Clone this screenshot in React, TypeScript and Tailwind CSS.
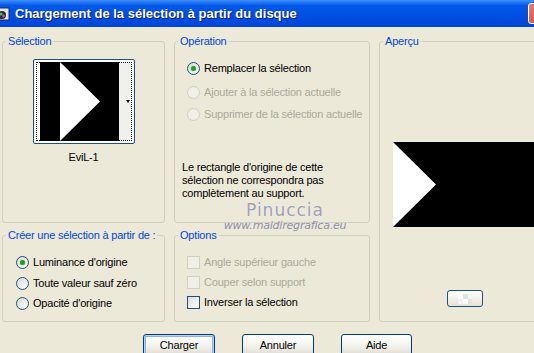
import React from "react";

type Opt = { label: string; checked?: boolean; disabled?: boolean; className?: string };

const Radio = ({ label, checked, disabled, className = "" }: Opt) => (
  <div className={`flex h-[13px] items-center gap-[4px] whitespace-nowrap ${className}`}>
    <span
      className={`flex h-[13px] w-[13px] shrink-0 items-center justify-center rounded-full border ${
        disabled
          ? "border-[#d3d0c2] bg-[#f1efe6]"
          : "border-[#1c5180] bg-linear-to-br from-[#d8d8d2] to-white"
      }`}
    >
      {checked && <span className="h-[5px] w-[5px] rounded-full bg-[#21a121] shadow-[0_0_1px_#62c462]" />}
    </span>
    <span className={disabled ? "text-[#aca899]" : "text-black"}>{label}</span>
  </div>
);

const Check = ({ label, disabled, className = "" }: Opt) => (
  <div className={`flex h-[13px] items-center gap-[4px] whitespace-nowrap ${className}`}>
    <span
      className={`h-[13px] w-[13px] shrink-0 border ${
        disabled
          ? "border-[#d3d0c2] bg-[#f1efe6]"
          : "border-[#1c5180] bg-linear-to-br from-[#dcdcd7] to-white"
      }`}
    />
    <span className={disabled ? "text-[#aca899]" : "text-black"}>{label}</span>
  </div>
);

const Group = ({
  title,
  className = "",
  children,
}: {
  title: string;
  className?: string;
  children?: React.ReactNode;
}) => (
  <fieldset className={`min-w-0 rounded-[3px] border border-[#d0d0bf] ${className}`}>
    <legend className="ml-[3px] whitespace-nowrap px-[2px] leading-[13px] text-[#0046d5]">{title}</legend>
    {children}
  </fieldset>
);

const Button = ({ label, main }: { label: string; main?: boolean }) => (
  <button
    className={`h-[23px] rounded-[3px] border border-[#003c74] bg-linear-to-b from-white via-[#f3f3ee] to-[#dcd8cc] text-black ${
      main ? "shadow-[inset_0_0_0_1px_#b9d3f7,inset_0_0_0_2px_#8bb1ec]" : ""
    }`}
  >
    {label}
  </button>
);

export default function App() {
  return (
    <div className="relative h-[353px] w-[534px] overflow-hidden bg-[#ece9d8] font-['Liberation_Sans',Tahoma,sans-serif] text-[11px] leading-[13px] tracking-[-0.2px]">
      {/* title bar */}
      <div className="flex h-[27px] items-center overflow-hidden bg-linear-to-b from-[#3d8ffa] from-0% via-[#0058e8] via-20% to-[#0046d8] to-100%">
        <svg width="13" height="14" viewBox="0 0 13 14" className="-ml-[3px] shrink-0">
          <rect x="1" y="1" width="11" height="12" fill="#e8e8f0" stroke="#1a2a6a" />
          <circle cx="5" cy="8" r="4" fill="#2a2a2a" />
          <circle cx="4" cy="7" r="1.6" fill="#39c94a" />
          <circle cx="6.5" cy="9" r="1.4" fill="#d23bd8" />
        </svg>
        <span className="ml-[5px] whitespace-nowrap text-[13px] font-bold tracking-[0px] text-white [text-shadow:1px_1px_#0a1a80]">
          Chargement de la sélection à partir du disque
        </span>
        <span className="ml-auto -mr-[15px] h-[21px] w-[21px] shrink-0 rounded-[3px] border border-white bg-linear-to-br from-[#e8826a] to-[#c73a1c]" />
      </div>

      {/* body */}
      <div className="grid grid-cols-[163px_196px_172px] grid-rows-[188px_93px] gap-x-[9px] gap-y-[6px] pl-[2px] pt-[8px]">
        <Group title="Sélection" className="flex flex-col items-center">
          <div className="mt-[11px] flex h-[85px] w-[102px] rounded-[2px] border border-[#1c5180] bg-white p-[2px]">
            <div className="flex flex-1 items-center border border-dotted border-black pl-[3px]">
              <svg width="79" height="79" viewBox="0 0 79 79" className="shrink-0">
                <rect width="79" height="79" fill="#000" />
                <polygon points="20,0 60,39.5 20,79" fill="#fff" />
              </svg>
              <div className="flex h-full flex-1 items-center justify-end bg-[#f0f0ec] pr-[1px]">
                <span className="h-0 w-0 border-x-[2.5px] border-t-[3px] border-x-transparent border-t-black" />
              </div>
            </div>
          </div>
          <div className="mt-[7px] text-black">EviL-1</div>
        </Group>

        <Group title="Opération" className="flex flex-col">
          <Radio label="Remplacer la sélection" checked className="ml-[12px] mt-[14px]" />
          <Radio label="Ajouter à la sélection actuelle" disabled className="ml-[12px] mt-[11px]" />
          <Radio label="Supprimer de la sélection actuelle" disabled className="ml-[12px] mt-[9px]" />
          <p className="ml-[7px] mt-[40px] text-black">
            Le rectangle d'origine de cette
            <br />
            sélection ne correspondra pas
            <br />
            complètement au support.
          </p>
        </Group>

        <Group title="Aperçu" className="row-span-2 flex flex-col">
          <svg width="144" height="85" viewBox="0 0 144 85" className="ml-[13px] mt-[94px] shrink-0">
            <rect width="144" height="85" fill="#000" />
            <polygon points="0,0 43,42.5 0,85" fill="#fff" />
          </svg>
          <div className="ml-[67px] mt-[63px] flex h-[17px] w-[36px] items-center justify-center rounded-[3px] border border-[#1c5180] bg-linear-to-b from-white to-[#e6e3d6]">
            <svg width="14" height="10" viewBox="0 0 14 10">
              <rect width="14" height="10" fill="#f4f4f0" />
              <rect x="0" y="0" width="5" height="5" fill="#fff" />
              <rect x="5" y="5" width="5" height="5" fill="#fff" />
              <rect x="5" y="0" width="5" height="5" fill="#e2e2de" />
              <rect x="10" y="5" width="4" height="5" fill="#e2e2de" />
            </svg>
          </div>
        </Group>

        <Group title="Créer une sélection à partir de :" className="flex flex-col">
          <Radio label="Luminance d'origine" checked className="ml-[13px] mt-[14px]" />
          <Radio label="Toute valeur sauf zéro" className="ml-[13px] mt-[8px]" />
          <Radio label="Opacité d'origine" className="ml-[13px] mt-[7px]" />
        </Group>

        <Group title="Options" className="flex flex-col">
          <Check label="Angle supérieur gauche" disabled className="ml-[12px] mt-[14px]" />
          <Check label="Couper selon support" disabled className="ml-[12px] mt-[7px]" />
          <Check label="Inverser la sélection" className="ml-[12px] mt-[7px]" />
        </Group>
      </div>

      {/* buttons */}
      <div className="mt-[12px] grid grid-cols-[72px_72px_71px] gap-x-[27px] pl-[143px]">
        <Button label="Charger" main />
        <Button label="Annuler" />
        <Button label="Aide" />
      </div>

      {/* watermark */}
      <div className="pointer-events-none absolute left-[222px] top-[201px] flex w-[126px] flex-col items-center">
        <span className="font-['DejaVu_Sans',sans-serif] text-[17px] leading-[18px] tracking-[1px] text-[#9da0b8] [text-shadow:0_0_1px_#fff]">
          Pinuccia
        </span>
        <span className="font-['DejaVu_Sans',sans-serif] text-[11px] italic leading-[13px] tracking-[-0.2px] text-[#8c8fa8]">
          www.maidiregrafica.eu
        </span>
      </div>
    </div>
  );
}
